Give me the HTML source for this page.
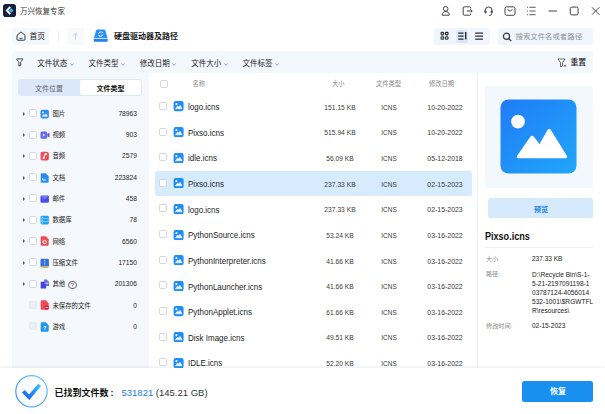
<!DOCTYPE html>
<html lang="zh-CN">
<head>
<meta charset="utf-8">
<title>万兴恢复专家</title>
<style>
*{box-sizing:border-box;margin:0;padding:0}
html,body{width:605px;height:414px;overflow:hidden;background:#fff}
body{position:relative;font-family:"Liberation Sans","Noto Sans CJK SC",sans-serif;color:#222;font-size:8px;line-height:1}
.a{position:absolute;white-space:nowrap}
.t{position:absolute;white-space:nowrap;line-height:12px;height:12px}
.cb{position:absolute;width:8px;height:8px;border:1px solid #d6d8dc;border-radius:1.800px;background:#fff}
.cb.dis{background:#eceef4;border-color:#e6e8ef}
.row{position:absolute;left:154.5px;width:318.5px;height:25px}
.fn{position:absolute;left:33.300px;top:7.800px;font-size:8.600px;line-height:12px;color:#1c1c1c;transform:scaleX(0.930);transform-origin:0 50%}
.sz{position:absolute;left:155px;width:60px;text-align:center;top:8.400px;font-size:7.400px;line-height:12px;color:#383838;transform:scaleX(0.905)}
.ty{position:absolute;left:214.500px;width:40px;text-align:center;top:8.400px;font-size:7.400px;line-height:12px;color:#383838;transform:scaleX(0.870)}
.dt{position:absolute;left:262px;width:56px;text-align:center;top:8.400px;font-size:7.400px;line-height:12px;color:#383838;transform:scaleX(0.935)}
.ic{position:absolute;left:18.500px;top:8px;width:10.500px;height:10.200px}
.row .cb{left:4.500px;top:8.500px}
.cat{position:absolute;left:18px;width:128px;height:20px}
.cat .cb{left:11.200px;top:5.700px}
.cat .nm{position:absolute;left:34.400px;top:4.300px;font-size:6.400px;font-weight:400;line-height:12px;color:#1a1a1a}
.cat .ct{position:absolute;right:9.300px;top:4.300px;font-size:7.200px;transform:scaleX(0.930);transform-origin:100% 50%;line-height:12px;color:#222}
.cat .ar{position:absolute;left:5px;top:8px;width:0;height:0;border-left:2.500px solid #555;border-top:2px solid transparent;border-bottom:2px solid transparent}
.cat svg{position:absolute;left:22.300px;top:5px;width:9.400px;height:10px}
.q{display:inline-block;width:8.600px;height:8.600px;border:0.700px solid #666;border-radius:50%;font-size:6px;line-height:7.400px;text-align:center;margin-left:3px;color:#555;vertical-align:-0.300px;font-weight:400}
.fl{position:absolute;top:58px;font-size:7.5px;line-height:12px;color:#222}
</style>
</head>
<body>
<!-- title bar -->
<svg class="a" style="left:3px;top:4px" width="13" height="13" viewBox="0 0 13 13"><rect x="0" y="0" width="13" height="13" rx="2.800" fill="#14213d"/><path d="M6.600 2.300 L2.500 6.500 L6.600 10.700 L8 9.300 L5.300 6.500 L8 3.700 Z" fill="#fff"/><path d="M8.300 4.300 L10.500 6.500 L8.300 8.700 L6.100 6.500 Z" fill="#3fb4ff"/></svg>
<div class="t" style="left:20px;top:5.500px;font-size:7.500px;color:#333">万兴恢复专家</div>

<!-- window icons -->
<svg class="a" style="left:440px;top:4px" width="165" height="15" viewBox="0 0 165 15" fill="none" stroke="#3a3a3a" stroke-width="0.950">
<circle cx="5.700" cy="4.800" r="2.300"/><path d="M2.200 11.200 C2.200 8.600 3.700 7.600 5.700 7.600 C7.700 7.600 9.200 8.600 9.200 11.200 Z"/>
<path d="M30.700 4.500 V3.800 a1 1 0 0 0 -1 -1 H24.200 a1 1 0 0 0 -1 1 V10.200 a1 1 0 0 0 1 1 H29.700 a1 1 0 0 0 1 -1 V9.500"/><path d="M26.700 7 H32.200 M30.700 5.500 L32.200 7 L30.700 8.500"/>
<path d="M45.100 8 V6.500 a3.500 3.500 0 0 1 7 0 V8"/><rect x="44.600" y="6.500" width="1.800" height="3" rx="0.800" fill="#444" stroke="none"/><rect x="50.800" y="6.500" width="1.800" height="3" rx="0.800" fill="#444" stroke="none"/><path d="M51.600 9.500 C51.600 11 50.600 11.500 49.100 11.500"/>
<rect x="65" y="2.800" width="10" height="8.500" rx="1.800"/><path d="M67.500 5.300 L70 7.300 L72.500 5.300"/>
<path d="M89.400 3.300 H95.600 M89.400 7 H95.600 M89.400 10.700 H95.600" stroke="#505050"/><path d="M87 3.300 H87.900 M87 7 H87.900 M87 10.700 H87.900"/>
<path d="M108.600 7 H117"/>
<rect x="130.300" y="3.100" width="7.800" height="7.800" rx="1.500"/>
<path d="M152 3.300 L159.400 10.700 M159.400 3.300 L152 10.700"/>
</svg>

<!-- toolbar -->
<div class="a" style="left:12px;top:28px;width:37px;height:17px;border-radius:3px;background:#f3f7fe"></div>
<svg class="a" style="left:16.400px;top:31px" width="10" height="10" viewBox="0 0 10 10" fill="none" stroke="#2a2a2a" stroke-width="0.950" stroke-linejoin="round"><path d="M1 4.300 L5 0.900 L9 4.300 V8.300 a0.900 0.900 0 0 1 -0.900 0.900 H1.900 a0.900 0.900 0 0 1 -0.900 -0.900 Z"/><path d="M3.600 7.300 H6.400"/></svg>
<div class="t" style="left:29.500px;top:31px;font-size:7.800px;color:#222">首页</div>
<div class="a" style="left:58px;top:30px;width:1px;height:13px;background:#f0f2f5"></div>
<div class="a" style="left:67px;top:28px;width:17px;height:17px;border-radius:3px;background:#f7f9fd"></div>
<svg class="a" style="left:71px;top:32px" width="9" height="9" viewBox="0 0 9 9" fill="none" stroke="#c5c8cf" stroke-width="0.8"><path d="M4.500 8 V1.200 M1.800 3.800 L4.500 1.200 L7.200 3.800"/></svg>
<svg class="a" style="left:93.300px;top:29.300px" width="16" height="14" viewBox="0 0 16 14"><path d="M4.300 0.400 H11.100 a1.200 1.200 0 0 1 1.150 0.850 L14.600 9.300 H0.800 L3.150 1.250 a1.200 1.200 0 0 1 1.150 -0.850 Z" fill="#2f8ffa"/><path d="M0.700 9.900 H14.700 V11.700 a1 1 0 0 1 -1 1 H1.700 a1 1 0 0 1 -1 -1 Z" fill="#1e82f5"/><path d="M5.700 4.600 a2.200 1.900 0 0 1 4 -0.800 M9.700 5.600 a2.200 1.900 0 0 1 -4 0.800" stroke="#fff" stroke-width="0.900" fill="none"/><path d="M9.100 2.700 L10 3.900 L8.700 4.200 Z M6.300 7.500 L5.400 6.300 L6.700 6 Z" fill="#fff"/></svg>
<div class="t" style="left:114px;top:31px;font-size:8px;font-weight:700;color:#1a1a1a">硬盘驱动器及路径</div>

<!-- view toggle -->
<div class="a" style="left:434.400px;top:27.700px;width:55.500px;height:17.300px;border-radius:3px;background:#f1f6fe"></div>
<div class="a" style="left:455.600px;top:29.700px;width:12.500px;height:13.200px;border-radius:2px;background:#d9e8fb"></div>
<svg class="a" style="left:434px;top:27.200px" width="56" height="18" viewBox="0 0 56 18" fill="none" stroke="#2a2a2a" stroke-width="1.250">
<g stroke-width="1.150" transform="translate(0 -0.200)"><rect x="7.100" y="5.500" width="2.500" height="2.500" rx="0.700"/><rect x="11.500" y="5.500" width="2.500" height="2.500" rx="0.700"/><rect x="7.100" y="9.900" width="2.500" height="2.500" rx="0.700"/><rect x="11.500" y="9.900" width="2.500" height="2.500" rx="0.700"/></g>
<path d="M24.200 6 H29.500 M24.200 9 H29.500 M24.200 12 H29.500"/><path d="M31.700 5 V12.600" stroke-width="1.400"/>
<path d="M41.200 6 H49 M41.200 9 H49 M41.200 12 H49"/>
</svg>

<!-- search -->
<div class="a" style="left:498px;top:27.500px;width:95px;height:17.500px;border-radius:3px;background:#f1f6fe"></div>
<svg class="a" style="left:501.800px;top:31.700px" width="10" height="10" viewBox="0 0 10 10" fill="none" stroke="#3a3a3a" stroke-width="1.300"><circle cx="4.500" cy="4.300" r="3.100"/><path d="M6.900 6.700 L9.300 9.100"/></svg>
<div class="t" style="left:515.500px;top:31px;font-size:7.400px;color:#8c8f96">搜索文件名或者路径</div>

<!-- filter bar -->
<div class="a" style="left:12px;top:51.200px;width:581px;height:21.500px;border-radius:3px 3px 0 0;background:#f3f7fe"></div>
<svg class="a" style="left:16px;top:58px" width="8" height="9" viewBox="0 0 8 9" fill="none" stroke="#333" stroke-width="0.900" stroke-linejoin="round"><path d="M0.800 0.900 H6.800 C6.800 2.600 4.700 3 4.700 4.800 V7.400 L2.900 8 V4.800 C2.900 3 0.800 2.600 0.800 0.900 Z"/></svg>
<div class="fl" style="left:37.300px">文件状态<svg style="display:inline-block;vertical-align:0.500px;margin-left:2.500px" width="4" height="3" viewBox="0 0 4 3" fill="none" stroke="#777" stroke-width="0.700"><path d="M0.400 0.500 L2 2.300 L3.600 0.500"/></svg></div>
<div class="fl" style="left:88.400px">文件类型<svg style="display:inline-block;vertical-align:0.500px;margin-left:2.500px" width="4" height="3" viewBox="0 0 4 3" fill="none" stroke="#777" stroke-width="0.700"><path d="M0.400 0.500 L2 2.300 L3.600 0.500"/></svg></div>
<div class="fl" style="left:139.700px">修改日期<svg style="display:inline-block;vertical-align:0.500px;margin-left:2.500px" width="4" height="3" viewBox="0 0 4 3" fill="none" stroke="#777" stroke-width="0.700"><path d="M0.400 0.500 L2 2.300 L3.600 0.500"/></svg></div>
<div class="fl" style="left:191.300px">文件大小<svg style="display:inline-block;vertical-align:0.500px;margin-left:2.500px" width="4" height="3" viewBox="0 0 4 3" fill="none" stroke="#777" stroke-width="0.700"><path d="M0.400 0.500 L2 2.300 L3.600 0.500"/></svg></div>
<div class="fl" style="left:242.400px">文件标签<svg style="display:inline-block;vertical-align:0.500px;margin-left:2.500px" width="4" height="3" viewBox="0 0 4 3" fill="none" stroke="#777" stroke-width="0.700"><path d="M0.400 0.500 L2 2.300 L3.600 0.500"/></svg></div>
<svg class="a" style="left:556.800px;top:58px" width="10" height="10" viewBox="0 0 10 10" fill="none" stroke="#333" stroke-width="0.7"><path d="M1 1 H8 L5.500 4.500 V8 L3.500 8.800 V4.500 Z"/><path d="M7 6.800 L9 8.800 M9 6.800 L7 8.800"/></svg>
<div class="fl" style="left:570.500px;top:57px;font-weight:500;font-size:7.800px">重置</div>

<!-- left panel -->
<div class="a" style="left:12px;top:72.500px;width:136.800px;height:299px;background:#f5f8fd"></div>
<div class="a" style="left:18px;top:79px;width:124px;height:17px;border-radius:3px;background:#dbe8fa"></div>
<div class="a" style="left:80px;top:80px;width:61px;height:15px;border-radius:2px;background:#fff"></div>
<div class="t" style="left:18px;top:82.500px;width:62px;text-align:center;font-size:7px;color:#666">文件位置</div>
<div class="t" style="left:80px;top:82.500px;width:61px;text-align:center;font-size:7px;font-weight:700;color:#111">文件类型</div>

<div class="cat" style="top:103.6px"><div class="ar"></div><div class="cb"></div><svg viewBox="0 0 9 10"><rect x="0.300" y="0.700" width="8.400" height="8.700" rx="1.800" fill="#2b8ef5"/><circle cx="2.900" cy="3.400" r="0.900" fill="#fff"/><path d="M1.600 7.600 L3.600 5.100 L4.700 6.300 L5.900 4.600 L7.700 7.600 Z" fill="#fff"/></svg><div class="nm">图片</div><div class="ct">78963</div></div>
<div class="cat" style="top:124.9px"><div class="ar"></div><div class="cb"></div><svg viewBox="0 0 9 10"><rect x="0.300" y="1.500" width="6.700" height="7.200" rx="1.500" fill="#6466f1"/><path d="M7.200 4 L9.200 2.800 V7.400 L7.200 6.200 Z" fill="#4f46e5"/><path d="M2.700 3.500 L5.200 5.100 L2.700 6.700 Z" fill="#dfe1ff"/></svg><div class="nm">视频</div><div class="ct">903</div></div>
<div class="cat" style="top:146.2px"><div class="ar"></div><div class="cb"></div><svg viewBox="0 0 9 10"><rect x="0.300" y="0.700" width="8.400" height="8.700" rx="2" fill="#ef4a5a"/><path d="M4.200 6.700 V2.900 L6.500 2.300 V3.700 L4.200 4.300" fill="#fff" stroke="#fff" stroke-width="0.500"/><circle cx="3.600" cy="6.800" r="1.200" fill="#fff"/></svg><div class="nm">音频</div><div class="ct">2579</div></div>
<div class="cat" style="top:167.5px"><div class="ar"></div><div class="cb"></div><svg viewBox="0 0 9 10"><path d="M1.700 0.300 H5.600 L8.500 3.200 V8.500 a1.200 1.200 0 0 1 -1.200 1.200 H1.700 a1.200 1.200 0 0 1 -1.200 -1.200 V1.500 a1.200 1.200 0 0 1 1.200 -1.200 Z" fill="#2d8cf2"/><path d="M2.500 5.300 V7 H5.800" stroke="#fff" stroke-width="0.900" fill="none"/></svg><div class="nm">文档</div><div class="ct">223824</div></div>
<div class="cat" style="top:188.8px"><div class="ar"></div><div class="cb"></div><svg viewBox="0 0 9 10"><rect x="0.300" y="1.500" width="8.400" height="7.200" rx="1.200" fill="#4b4fe2"/><path d="M0.600 1.900 L4.500 5.400 L8.400 1.900 Z" fill="#7378f6"/></svg><div class="nm">邮件</div><div class="ct">458</div></div>
<div class="cat" style="top:210.1px"><div class="ar"></div><div class="cb"></div><svg viewBox="0 0 9 10"><rect x="0.300" y="0.700" width="8.400" height="8.700" rx="1.300" fill="#1da1f2"/><path d="M0.300 3.600 H8.700 M0.300 6.500 H8.700" stroke="#d6eeff" stroke-width="0.500"/><path d="M1.500 2.200 H2.700 M1.500 5.100 H2.700 M1.500 8 H2.700" stroke="#fff" stroke-width="0.800"/></svg><div class="nm">数据库</div><div class="ct">78</div></div>
<div class="cat" style="top:231.4px"><div class="ar"></div><div class="cb"></div><svg viewBox="0 0 9 10"><path d="M1.700 0.300 H5.600 L8.500 3.200 V8.500 a1.200 1.200 0 0 1 -1.200 1.200 H1.700 a1.200 1.200 0 0 1 -1.200 -1.200 V1.500 a1.200 1.200 0 0 1 1.200 -1.200 Z" fill="#ef4a55"/><circle cx="4.400" cy="6" r="1.700" fill="none" stroke="#fff" stroke-width="1"/></svg><div class="nm">网络</div><div class="ct">6560</div></div>
<div class="cat" style="top:252.7px"><div class="ar"></div><div class="cb"></div><svg viewBox="0 0 9 10"><rect x="0.300" y="0.700" width="8.400" height="8.700" rx="1.300" fill="#2f6fe8"/><rect x="0.300" y="8.200" width="8.400" height="1.200" fill="#f5c63c"/><path d="M4.500 1.800 V7.300" stroke="#ffd95a" stroke-width="0.900" stroke-dasharray="1.200 0.500"/></svg><div class="nm">压缩文件</div><div class="ct">17150</div></div>
<div class="cat" style="top:274.0px"><div class="ar"></div><div class="cb"></div><svg viewBox="0 0 9 10"><path d="M3.800 0.500 H6.600 L8.800 2.700 V7 H3.800 Z" fill="#6a73f0"/><path d="M0.500 2.800 H4.500 L6 4.300 V9.500 H0.500 Z" fill="#3d47dc"/><path d="M4.500 4.300 H8" stroke="#fff" stroke-width="0.700"/></svg><div class="nm">其他<span class="q">?</span></div><div class="ct">201306</div></div>
<div class="cat" style="top:295.3px"><div class="cb dis"></div><svg viewBox="0 0 9 10"><path d="M1.700 0.300 H5.600 L8.500 3.200 V8.500 a1.200 1.200 0 0 1 -1.200 1.200 H1.700 a1.200 1.200 0 0 1 -1.200 -1.200 V1.500 a1.200 1.200 0 0 1 1.200 -1.200 Z" fill="#ef4a55"/><circle cx="6.600" cy="7.500" r="2.200" fill="#dc2333"/><path d="M5.400 7.500 H7.800" stroke="#fff" stroke-width="0.700"/></svg><div class="nm">未保存的文件</div><div class="ct">0</div></div>
<div class="cat" style="top:316.6px"><div class="cb dis"></div><svg viewBox="0 0 9 10"><path d="M1.700 0.300 H5.600 L8.500 3.200 V8.500 a1.200 1.200 0 0 1 -1.200 1.200 H1.700 a1.200 1.200 0 0 1 -1.200 -1.200 V1.500 a1.200 1.200 0 0 1 1.200 -1.200 Z" fill="#1e96f3"/><text x="2.900" y="7.900" font-size="5.500" font-weight="700" fill="#fff" font-family="Liberation Sans, sans-serif">?</text></svg><div class="nm">游戏</div><div class="ct">0</div></div>

<!-- file list -->
<div class="cb" style="left:159.500px;top:79.700px"></div>
<div class="t" style="left:192.500px;top:77.700px;font-size:6.300px;color:#888">名称</div>
<div class="t" style="left:308.200px;top:77.700px;width:60px;text-align:center;font-size:6.300px;color:#888">大小</div>
<div class="t" style="left:368.500px;top:77.700px;width:40px;text-align:center;font-size:6.300px;color:#888">文件类型</div>
<div class="t" style="left:413.500px;top:77.700px;width:56px;text-align:center;font-size:6.300px;color:#888">修改日期</div>

<div class="row" style="top:93.4px"><div class="cb"></div><svg class="ic" viewBox="-0.600 0 10.500 10" preserveAspectRatio="none"><rect x="0" y="0" width="10" height="10" rx="2.100" fill="#1c8dfb"/><circle cx="2.800" cy="3.100" r="1.050" fill="#fff"/><path d="M1.700 7.700 L4.100 4.800 L5.200 6 L6.500 4.200 L8.500 7.700 Z" fill="#fff" stroke="#fff" stroke-width="0.400" stroke-linejoin="round"/></svg><div class="fn">logo.icns</div><div class="sz">151.15 KB</div><div class="ty">ICNS</div><div class="dt">10-20-2022</div></div>
<div class="row" style="top:119.0px"><div class="cb"></div><svg class="ic" viewBox="-0.600 0 10.500 10" preserveAspectRatio="none"><rect x="0" y="0" width="10" height="10" rx="2.100" fill="#1c8dfb"/><circle cx="2.800" cy="3.100" r="1.050" fill="#fff"/><path d="M1.700 7.700 L4.100 4.800 L5.200 6 L6.500 4.200 L8.500 7.700 Z" fill="#fff" stroke="#fff" stroke-width="0.400" stroke-linejoin="round"/></svg><div class="fn">Pixso.icns</div><div class="sz">515.94 KB</div><div class="ty">ICNS</div><div class="dt">10-20-2022</div></div>
<div class="row" style="top:144.7px"><div class="cb"></div><svg class="ic" viewBox="-0.600 0 10.500 10" preserveAspectRatio="none"><rect x="0" y="0" width="10" height="10" rx="2.100" fill="#1c8dfb"/><circle cx="2.800" cy="3.100" r="1.050" fill="#fff"/><path d="M1.700 7.700 L4.100 4.800 L5.200 6 L6.500 4.200 L8.500 7.700 Z" fill="#fff" stroke="#fff" stroke-width="0.400" stroke-linejoin="round"/></svg><div class="fn">idle.icns</div><div class="sz">56.09 KB</div><div class="ty">ICNS</div><div class="dt">05-12-2018</div></div>
<div class="a" style="left:154.500px;top:170.9px;width:317.800px;height:25.100px;background:#d6ebfd;border-radius:2px"></div>
<div class="row" style="top:170.3px"><div class="cb"></div><svg class="ic" viewBox="-0.600 0 10.500 10" preserveAspectRatio="none"><rect x="0" y="0" width="10" height="10" rx="2.100" fill="#1c8dfb"/><circle cx="2.800" cy="3.100" r="1.050" fill="#fff"/><path d="M1.700 7.700 L4.100 4.800 L5.200 6 L6.500 4.200 L8.500 7.700 Z" fill="#fff" stroke="#fff" stroke-width="0.400" stroke-linejoin="round"/></svg><div class="fn">Pixso.icns</div><div class="sz">237.33 KB</div><div class="ty">ICNS</div><div class="dt">02-15-2023</div></div>
<div class="row" style="top:195.9px"><div class="cb"></div><svg class="ic" viewBox="-0.600 0 10.500 10" preserveAspectRatio="none"><rect x="0" y="0" width="10" height="10" rx="2.100" fill="#1c8dfb"/><circle cx="2.800" cy="3.100" r="1.050" fill="#fff"/><path d="M1.700 7.700 L4.100 4.800 L5.200 6 L6.500 4.200 L8.500 7.700 Z" fill="#fff" stroke="#fff" stroke-width="0.400" stroke-linejoin="round"/></svg><div class="fn">logo.icns</div><div class="sz">237.33 KB</div><div class="ty">ICNS</div><div class="dt">02-15-2023</div></div>
<div class="row" style="top:221.6px"><div class="cb"></div><svg class="ic" viewBox="-0.600 0 10.500 10" preserveAspectRatio="none"><rect x="0" y="0" width="10" height="10" rx="2.100" fill="#1c8dfb"/><circle cx="2.800" cy="3.100" r="1.050" fill="#fff"/><path d="M1.700 7.700 L4.100 4.800 L5.200 6 L6.500 4.200 L8.500 7.700 Z" fill="#fff" stroke="#fff" stroke-width="0.400" stroke-linejoin="round"/></svg><div class="fn">PythonSource.icns</div><div class="sz">53.24 KB</div><div class="ty">ICNS</div><div class="dt">03-16-2022</div></div>
<div class="row" style="top:247.2px"><div class="cb"></div><svg class="ic" viewBox="-0.600 0 10.500 10" preserveAspectRatio="none"><rect x="0" y="0" width="10" height="10" rx="2.100" fill="#1c8dfb"/><circle cx="2.800" cy="3.100" r="1.050" fill="#fff"/><path d="M1.700 7.700 L4.100 4.800 L5.200 6 L6.500 4.200 L8.500 7.700 Z" fill="#fff" stroke="#fff" stroke-width="0.400" stroke-linejoin="round"/></svg><div class="fn">PythonInterpreter.icns</div><div class="sz">41.66 KB</div><div class="ty">ICNS</div><div class="dt">03-16-2022</div></div>
<div class="row" style="top:272.8px"><div class="cb"></div><svg class="ic" viewBox="-0.600 0 10.500 10" preserveAspectRatio="none"><rect x="0" y="0" width="10" height="10" rx="2.100" fill="#1c8dfb"/><circle cx="2.800" cy="3.100" r="1.050" fill="#fff"/><path d="M1.700 7.700 L4.100 4.800 L5.200 6 L6.500 4.200 L8.500 7.700 Z" fill="#fff" stroke="#fff" stroke-width="0.400" stroke-linejoin="round"/></svg><div class="fn">PythonLauncher.icns</div><div class="sz">41.66 KB</div><div class="ty">ICNS</div><div class="dt">03-16-2022</div></div>
<div class="row" style="top:298.4px"><div class="cb"></div><svg class="ic" viewBox="-0.600 0 10.500 10" preserveAspectRatio="none"><rect x="0" y="0" width="10" height="10" rx="2.100" fill="#1c8dfb"/><circle cx="2.800" cy="3.100" r="1.050" fill="#fff"/><path d="M1.700 7.700 L4.100 4.800 L5.200 6 L6.500 4.200 L8.500 7.700 Z" fill="#fff" stroke="#fff" stroke-width="0.400" stroke-linejoin="round"/></svg><div class="fn">PythonApplet.icns</div><div class="sz">61.66 KB</div><div class="ty">ICNS</div><div class="dt">03-16-2022</div></div>
<div class="row" style="top:324.1px"><div class="cb"></div><svg class="ic" viewBox="-0.600 0 10.500 10" preserveAspectRatio="none"><rect x="0" y="0" width="10" height="10" rx="2.100" fill="#1c8dfb"/><circle cx="2.800" cy="3.100" r="1.050" fill="#fff"/><path d="M1.700 7.700 L4.100 4.800 L5.200 6 L6.500 4.200 L8.500 7.700 Z" fill="#fff" stroke="#fff" stroke-width="0.400" stroke-linejoin="round"/></svg><div class="fn">Disk Image.icns</div><div class="sz">49.51 KB</div><div class="ty">ICNS</div><div class="dt">03-16-2022</div></div>
<div class="row" style="top:349.7px"><div class="cb"></div><svg class="ic" viewBox="-0.600 0 10.500 10" preserveAspectRatio="none"><rect x="0" y="0" width="10" height="10" rx="2.100" fill="#1c8dfb"/><circle cx="2.800" cy="3.100" r="1.050" fill="#fff"/><path d="M1.700 7.700 L4.100 4.800 L5.200 6 L6.500 4.200 L8.500 7.700 Z" fill="#fff" stroke="#fff" stroke-width="0.400" stroke-linejoin="round"/></svg><div class="fn">IDLE.icns</div><div class="sz">52.20 KB</div><div class="ty">ICNS</div><div class="dt">03-16-2022</div></div>

<!-- right panel -->
<div class="a" style="left:477px;top:73px;width:1px;height:299px;background:#eef0f4"></div>
<div class="a" style="left:485px;top:85.500px;width:107.500px;height:102.200px;border-radius:3px;background:#f3f7fe"></div>
<svg class="a" style="left:500px;top:99px" width="78" height="76" viewBox="0 0 78 76"><defs><linearGradient id="g1" x1="0" y1="0" x2="1" y2="1"><stop offset="0" stop-color="#1f7cf6"/><stop offset="1" stop-color="#21a6fb"/></linearGradient></defs><rect x="0.500" y="0.500" width="76" height="74" rx="8" fill="url(#g1)"/><circle cx="18" cy="22.600" r="6.900" fill="#fff"/><path d="M17 57 L30.500 37.500 a2 2 0 0 1 3.200 0 L39.500 45 L47.500 31 a2 2 0 0 1 3.400 0 L67 57 a1.500 1.500 0 0 1 -1.300 2.300 H18.300 a1.500 1.500 0 0 1 -1.300 -2.300 Z" fill="#fff"/></svg>
<div class="a" style="left:487.500px;top:198px;width:105.800px;height:19.500px;border-radius:2.500px;background:#d5eafd"></div>
<div class="t" style="left:488px;top:203.600px;width:106px;text-align:center;font-size:7.100px;color:#1a7fe8;font-weight:700">预览</div>
<div class="t" style="left:485px;top:230.600px;font-size:10px;font-weight:700;color:#111;transform:scaleX(0.905);transform-origin:0 50%">Pixso.icns</div>
<div class="a" style="left:485px;top:247px;width:108px;height:1px;background:#eceef2"></div>
<div class="t" style="left:486px;top:253px;font-size:6px;color:#888">大小:</div>
<div class="t" style="left:532px;top:253px;font-size:6.500px;color:#222">237.33 KB</div>
<div class="t" style="left:486px;top:268px;font-size:6px;color:#888">路径:</div>
<div class="a" style="left:532px;top:270.300px;font-size:6.600px;line-height:9.050px;color:#222;white-space:normal;width:64px">D:\Recycle Bin\S-1-<br>5-21-2197091198-1<br>03787124-4056014<br>532-1001\$RGWTFL<br>R\resources\</div>
<div class="t" style="left:486px;top:320px;font-size:6.200px;color:#888">修改时间:</div>
<div class="t" style="left:532px;top:320px;font-size:6.500px;color:#222">02-15-2023</div>

<!-- bottom bar -->
<div class="a" style="left:0;top:368px;width:605px;height:46px;background:#fff;box-shadow:0 -1px 3px rgba(120,140,170,0.160)"></div>
<svg class="a" style="left:14px;top:375px" width="35" height="34" viewBox="0 0 35 34" fill="none"><defs><linearGradient id="g2" x1="0" y1="1" x2="1" y2="0"><stop offset="0" stop-color="#1766f0"/><stop offset="0.450" stop-color="#2186f5"/><stop offset="1" stop-color="#3cc4f6"/></linearGradient><linearGradient id="g3" x1="0" y1="1" x2="1" y2="0"><stop offset="0" stop-color="#3a8af5"/><stop offset="1" stop-color="#6fcdf9"/></linearGradient></defs><circle cx="17.500" cy="16.300" r="15.700" fill="#fafcff" stroke="url(#g3)" stroke-width="1.200"/><path d="M9.300 16.200 L15.200 22.300 L25.600 9.900" stroke="url(#g2)" stroke-width="3.700" stroke-linejoin="miter"/></svg>
<div class="t" style="left:54.500px;top:386.500px;font-size:9px;font-weight:700;color:#111">已找到文件数<span style="font-family:'Liberation Sans',sans-serif;margin-left:2px">:</span></div>
<div class="t" style="left:121.500px;top:386.500px;font-size:9.500px;color:#1f78e6">531821 <span style="color:#333">(145.21 GB)</span></div>
<div class="a" style="left:522.400px;top:380.700px;width:71px;height:21.400px;border-radius:2.500px;background:#1890f0"></div>
<div class="t" style="left:522.400px;top:386px;width:71px;text-align:center;font-size:8px;font-weight:700;color:#fff">恢复</div>

</body>
</html>
